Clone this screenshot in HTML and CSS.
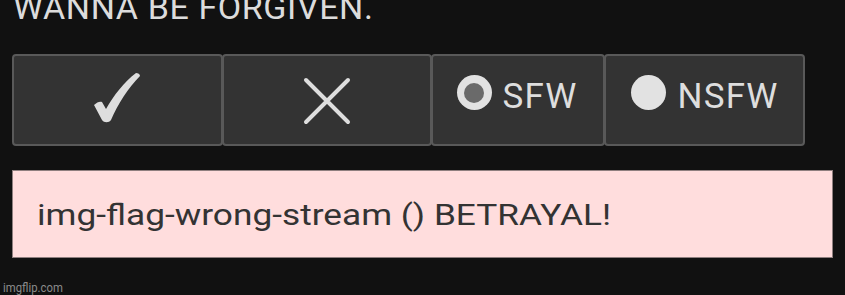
FILE: index.html
```html
<!DOCTYPE html>
<html>
<head>
<meta charset="utf-8">
<link rel="stylesheet" href="styles.css">
</head>
<body>
<div class="page">
  <div class="title">WANNA BE FORGIVEN.</div>
  <div class="btnrow">
    <div class="btn btn-ok">
      <svg class="ico-check" width="46" height="50" viewBox="0 0 46 50">
        <path d="M0 32 C3 29 6 28 8 29 L12 36 C20 22 30 9 42 0 C44 0 46 1 46 3 C34 15 24 31 17 47 C15 50 10 50 8 47 Z" fill="#dedede"/>
      </svg>
    </div>
    <div class="btn btn-no">
      <svg width="48" height="48" viewBox="0 0 48 48">
        <path d="M3 3 L45 45 M45 3 L3 45" stroke="#dedede" stroke-width="4" stroke-linecap="round"/>
      </svg>
    </div>
    <div class="btn btn-sfw">
      <span class="radio radio-on"><span class="dot"></span></span>
      <span class="lbl">SFW</span>
    </div>
    <div class="btn btn-nsfw">
      <span class="radio radio-off"></span>
      <span class="lbl">NSFW</span>
    </div>
  </div>
  <div class="flag"><span class="flag-text">img-flag-wrong-stream () BETRAYAL!</span></div>
  <div class="wm"><span class="wm-text">imgflip.com</span></div>
</div>
</body>
</html>
```
FILE: styles.css
```css
html, body {
  margin: 0;
  padding: 0;
  background: #111111;
  width: 845px;
  height: 295px;
  overflow: hidden;
}
.page {
  font-family: Roboto, "Liberation Sans", sans-serif;
  display: flex;
  flex-direction: column;
  padding-left: 12px;
}
.title {
  color: #dcdcdc;
  font-size: 34px;
  line-height: 34px;
  height: 34px;
  margin-top: -10px;
  padding-left: 1px;
  letter-spacing: 0.6px;
}
.btnrow {
  display: flex;
  margin-top: 30px;
  height: 92px;
}
.btn {
  box-sizing: border-box;
  height: 92px;
  background: #333333;
  border: 2px solid #595959;
  border-radius: 4px;
  display: flex;
  align-items: center;
  justify-content: center;
  color: #dedede;
}
.btn + .btn {
  margin-left: -1px;
}
.btn-ok { width: 211px; }
.btn-no { width: 210px; }
.btn-sfw { width: 174px; align-items: flex-start; padding-top: 19px; gap: 11px; padding-right: 2px; }
.btn-nsfw { width: 201px; align-items: flex-start; padding-top: 19px; gap: 12px; }
.ico-check { margin-top: -4px; margin-left: -2px; }
.btn-no svg { margin-top: 1px; }
.radio {
  width: 35px;
  height: 35px;
  border-radius: 50%;
  background: #e2e2e2;
  display: flex;
  align-items: center;
  justify-content: center;
  flex: none;
}
.dot {
  width: 20px;
  height: 20px;
  border-radius: 50%;
  background: #6a6a6a;
}
.lbl {
  font-size: 35px;
  line-height: 40px;
  margin-top: 2px;
  letter-spacing: 1.2px;
}
.flag {
  box-sizing: border-box;
  margin-top: 24px;
  width: 821px;
  height: 88px;
  background: #ffdddd;
  border: 1px solid #8f7f7f;
  color: #333333;
  font-size: 30px;
  line-height: 30px;
  padding: 29px 0 0 24px;
}
.flag-text {
  display: inline-block;
  transform: scaleX(1.175);
  transform-origin: left center;
}
.wm {
  margin-top: 23px;
  margin-left: -9px;
  font-size: 13px;
  line-height: 14px;
  color: #8a8a8a;
}
.wm-text {
  display: inline-block;
  transform: scaleX(0.87);
  transform-origin: left center;
}
```
